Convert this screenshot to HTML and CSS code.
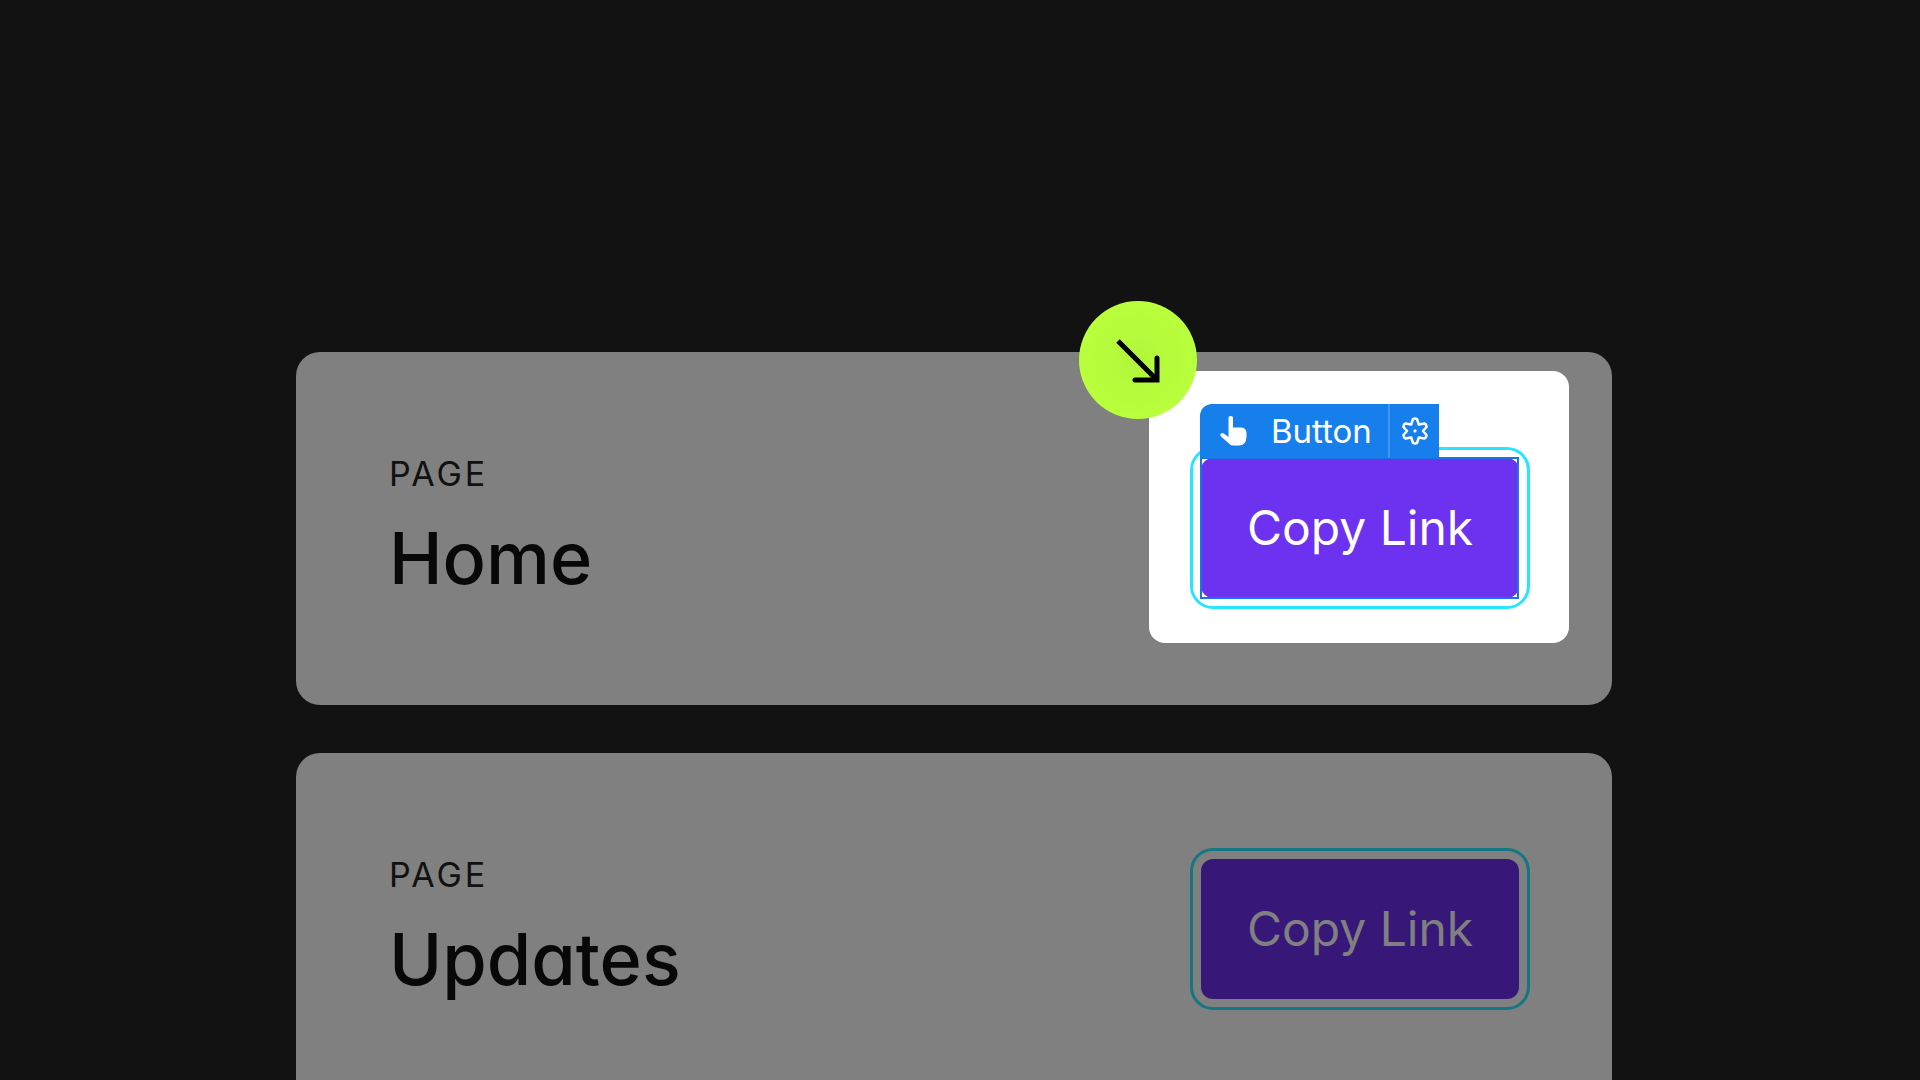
FILE: index.html
```html
<!DOCTYPE html>
<html lang="en">
<head>
  <meta charset="utf-8">
  <meta name="viewport" content="width=device-width, initial-scale=1">
  <title>Pages</title>
  <link rel="stylesheet" href="styles.css">
</head>
<body>
  <main class="pages">
    <article class="card">
      <div class="card-text">
        <p class="eyebrow">PAGE</p>
        <h2 class="title">Home</h2>
      </div>
      <div class="action action-selected">
        <div class="spotlight"></div>
        <button class="copy" type="button">Copy Link</button>
        <div class="selection"></div>
        <div class="toolbar">
          <span class="toolbar-name">
            <svg class="hand" viewBox="0 0 27 30" aria-hidden="true"><path d="M8.500 1.500Q8.500 0 10.700 0Q13 0 13 1.500V11.500H22Q26.500 12.500 26.500 17V21Q26 29.500 19 29.500H13Q11 29.500 9.500 28L1 20.500Q-.5 19 1 17.500Q2.500 16.500 4.500 18L8.500 21Z"/></svg>
            Button
          </span>
          <button class="settings" type="button" aria-label="Settings">
            <svg class="gear" viewBox="0 0 26 28" aria-hidden="true"><path d="M11 2Q13 1 15 2L16.800 7.500L22.500 6.500Q24.800 7.500 24.500 10L21 14L24.500 18Q24.800 20.500 22.500 21.500L16.800 20.500L15 26Q13 27 11 26L9.200 20.500L3.500 21.500Q1.200 20.500 1.500 18L5 14L1.500 10Q1.200 7.500 3.500 6.500L9.200 7.500Z"/><rect x="11.500" y="12.500" width="3" height="3" rx="1"/></svg>
          </button>
        </div>
        <div class="badge">
          <svg class="arrow" viewBox="0 0 118 118" aria-hidden="true"><path class="shaft" d="M39 40L77 78"/><path d="M78 57V79H56"/></svg>
        </div>
      </div>
    </article>

    <article class="card">
      <div class="card-text">
        <p class="eyebrow">PAGE</p>
        <h2 class="title">Updates</h2>
      </div>
      <div class="action action-dimmed">
        <button class="copy" type="button">Copy Link</button>
      </div>
    </article>
  </main>
</body>
</html>
```
FILE: styles.css
```css
* {
  box-sizing: border-box;
}

body {
  margin: 0;
  height: 100vh;
  overflow: hidden;
  background: #121212;
  font-family: Inter, "Liberation Sans", sans-serif;
  font-feature-settings: "cv11";
}

.pages {
  display: flex;
  flex-direction: column;
  gap: 48px;
  padding: 352px 308px 0 296px;
}

.card {
  display: flex;
  align-items: center;
  justify-content: space-between;
  min-height: 353px;
  padding: 0 93px 1px;
  border-radius: 24px;
  background: #808080;
}

.card-text {
  display: flex;
  flex-direction: column;
  gap: 8px;
  padding-top: 4px;
}

.eyebrow {
  margin: 0;
  font-size: 34px;
  letter-spacing: 3px;
  line-height: 48px;
  color: #111;
}

.title {
  margin: 0;
  font-size: 72px;
  font-weight: 500;
  line-height: 104px;
  color: #080808;
}

.action {
  position: relative;
}

.copy {
  display: block;
  position: relative;
  width: 318px;
  height: 140px;
  padding: 0 0 2px;
  border: 0;
  border-radius: 12px;
  outline: 3px solid #28e5ff;
  outline-offset: 8px;
  background: #6d31f0;
  color: #fff;
  font: inherit;
  font-size: 48px;
}

.action-dimmed .copy {
  outline-color: #147783;
  background: #371879;
  color: #808080;
}

.spotlight {
  position: absolute;
  inset: -87px -50px -45px -52px;
  border-radius: 16px;
  background: #fff;
}

.selection {
  position: absolute;
  inset: -1px 0 -1px -1px;
  border: 2px solid #1a74e8;
}

.toolbar {
  position: absolute;
  bottom: 100%;
  left: -1px;
  display: flex;
  height: 54px;
  border-radius: 12px 0 0 0;
  background: #167fec;
  color: #fff;
}

.toolbar-name {
  display: flex;
  align-items: center;
  gap: 24px;
  width: 188px;
  padding-left: 20px;
  font-size: 33px;
}

.settings {
  display: flex;
  align-items: center;
  justify-content: center;
  width: 51px;
  padding: 0;
  border: 0;
  border-left: 2px solid #3f97f2;
  background: none;
}

.hand {
  width: 27px;
  height: 30px;
  fill: #fff;
}

.gear {
  width: 26px;
  height: 28px;
  fill: none;
  stroke: #fff;
  stroke-width: 2.500;
  stroke-linejoin: round;
}

.gear rect {
  fill: #fff;
  stroke: none;
}

.badge {
  position: absolute;
  top: -157px;
  left: -122px;
  width: 118px;
  height: 118px;
  border-radius: 50%;
  background: radial-gradient(circle, #b2f63b, #b9ff3c 70%);
}

.arrow {
  display: block;
  fill: none;
  stroke: #000;
  stroke-width: 5;
  stroke-linecap: round;
}

.arrow .shaft {
  stroke-linecap: butt;
}
```
